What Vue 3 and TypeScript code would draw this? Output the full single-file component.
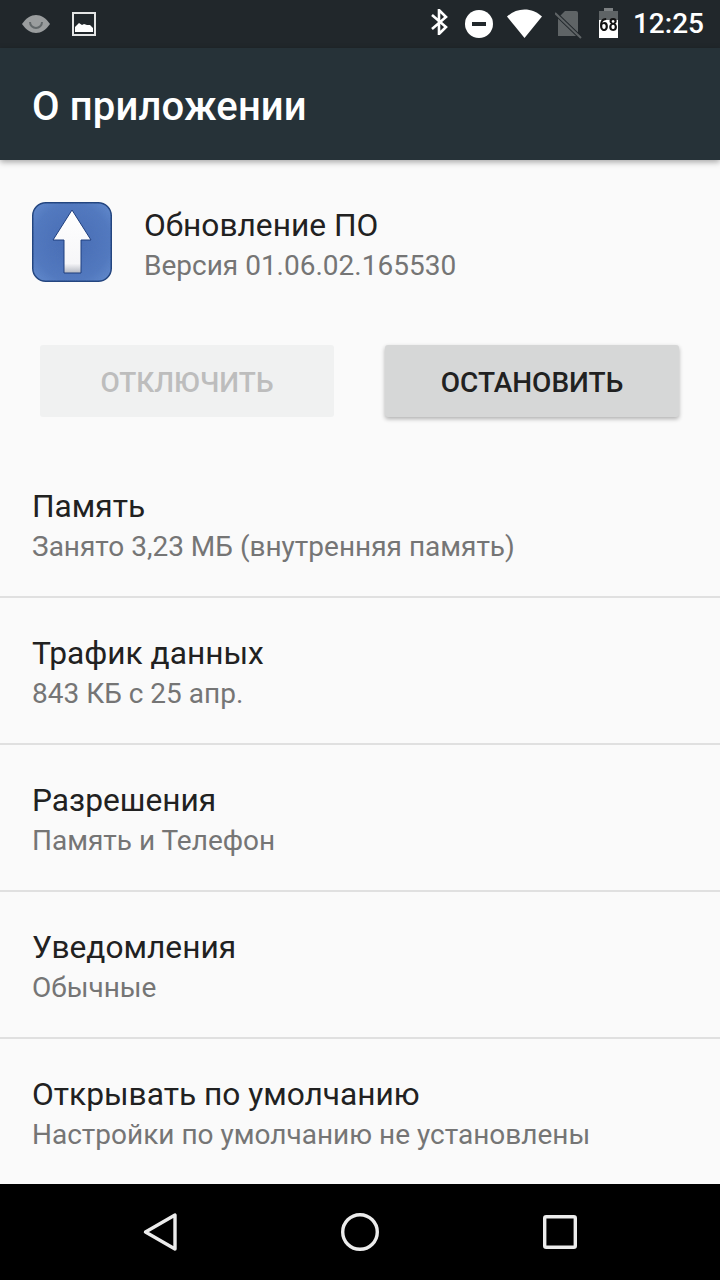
<script setup lang="ts">
const rows = [
  { title: 'Память', sub: 'Занято 3,23 МБ (внутренняя память)' },
  { title: 'Трафик данных', sub: '843 КБ с 25 апр.' },
  { title: 'Разрешения', sub: 'Память и Телефон' },
  { title: 'Уведомления', sub: 'Обычные' },
  { title: 'Открывать по умолчанию', sub: 'Настройки по умолчанию не установлены' },
]
</script>

<template>
  <div class="screen">
    <div class="status-bar">
      <div class="status-left">
        <svg class="eye" width="28" height="18" viewBox="0 0 28 18">
          <path d="M0 9C4 3 9 0 14 0s10 3 14 9c-4 6-9 9-14 9S4 15 0 9z" fill="#9a9d9e" />
          <path d="M8 7a6 6 0 0 0 12 0" fill="none" stroke="#62686a" stroke-width="2" />
        </svg>
        <svg class="pic" width="24" height="24" viewBox="0 0 24 24">
          <rect x="1" y="1" width="22" height="22" fill="#21272b" stroke="#e4e5e5" stroke-width="2" />
          <path d="M3 20v-5l4-4 3 2 2-1 3 1 3 0 3 3v4z" fill="#fff" />
        </svg>
      </div>
      <div class="status-right">
        <svg class="bt" width="18" height="26" viewBox="0 0 18 26">
          <path d="M2 6l14 12-7 7V1l7 7L2 20" fill="none" stroke="#fff" stroke-width="2.6" />
        </svg>
        <svg class="dnd" width="28" height="28" viewBox="0 0 28 28">
          <circle cx="14" cy="14" r="14" fill="#fff" />
          <rect x="7" y="12" width="14" height="4" fill="#21272b" />
        </svg>
        <svg class="wifi" width="35" height="29" viewBox="0 0 35 29">
          <path d="M0 7.5C5 3 11 .5 17.5 .5S30 3 35 7.5L17.5 29z" fill="#fff" />
        </svg>
        <svg class="sim" width="27" height="28" viewBox="0 0 27 28">
          <path d="M10 0h11a2 2 0 0 1 2 2v23H3V7z" fill="#5f6466" />
          <path d="M0 2l26 25" stroke="#21272b" stroke-width="4" />
          <path d="M0 2l26 25" stroke="#5f6466" stroke-width="2" />
        </svg>
        <div class="battery">
          <div class="battery-cap"></div>
          <div class="battery-body"><span>68</span></div>
        </div>
        <span class="clock">12:25</span>
      </div>
    </div>

    <header class="app-bar">
      <h1>О приложении</h1>
    </header>

    <main class="content">
      <section class="app-head">
        <svg class="app-icon" width="80" height="80" viewBox="0 0 80 80">
          <defs>
            <radialGradient id="tile" cx="50%" cy="50%" r="65%">
              <stop offset="0" stop-color="#466bb4" />
              <stop offset="0.75" stop-color="#5279c0" />
              <stop offset="1" stop-color="#6088cc" />
            </radialGradient>
            <linearGradient id="arrow" x1="0" y1="0" x2="0" y2="1">
              <stop offset="0" stop-color="#ffffff" />
              <stop offset="0.85" stop-color="#f6f6f8" />
              <stop offset="1" stop-color="#b4b8c2" />
            </linearGradient>
            <filter id="grain" x="0" y="0" width="100%" height="100%">
              <feTurbulence type="fractalNoise" baseFrequency="0.9" numOctaves="2" seed="4" />
              <feColorMatrix values="0 0 0 0 0.1  0 0 0 0 0.2  0 0 0 0 0.45  0 0 0 1.4 -0.5" />
              <feComposite in2="SourceGraphic" operator="in" />
            </filter>
          </defs>
          <rect x="0.75" y="0.75" width="78.5" height="78.5" rx="13" fill="url(#tile)" stroke="#23457f" stroke-width="1.5" />
          <rect x="1" y="1" width="78" height="78" rx="13" fill="#000" filter="url(#grain)" opacity="0.4" />
          <path d="M40 8L59 38H49V71H32V38H21z" fill="url(#arrow)" stroke="#1f3f7e" stroke-width="1" />
        </svg>
        <div class="app-text">
          <div class="app-name">Обновление ПО</div>
          <div class="app-version">Версия 01.06.02.165530</div>
        </div>
      </section>

      <div class="buttons">
        <button type="button" class="btn disabled">ОТКЛЮЧИТЬ</button>
        <button type="button" class="btn raised">ОСТАНОВИТЬ</button>
      </div>

      <div class="list">
        <div v-for="row in rows" :key="row.title" class="row">
          <div class="row-title">{{ row.title }}</div>
          <div class="row-sub">{{ row.sub }}</div>
        </div>
      </div>
    </main>

    <nav class="nav-bar">
      <svg width="34" height="40" viewBox="0 0 34 40">
        <path d="M2.5 20L32 3v34z" fill="none" stroke="#ececec" stroke-width="3.4" stroke-linejoin="round" />
      </svg>
      <svg width="38" height="38" viewBox="0 0 38 38">
        <circle cx="19" cy="19" r="17.3" fill="none" stroke="#ececec" stroke-width="3.4" />
      </svg>
      <svg width="34" height="34" viewBox="0 0 34 34">
        <rect x="1.7" y="1.7" width="30.6" height="30.6" rx="1.5" fill="none" stroke="#ececec" stroke-width="3.4" />
      </svg>
    </nav>
  </div>
</template>

<style>
html, body { margin: 0; background: #fafafa; }
</style>

<style scoped>
.screen {
  width: 720px;
  height: 1280px;
  display: flex;
  flex-direction: column;
  overflow: hidden;
  font-family: Roboto, "Noto Sans", sans-serif;
  background: #fafafa;
}

/* status bar */
.status-bar {
  height: 48px;
  flex: none;
  background: #21272b;
  display: flex;
  justify-content: space-between;
  align-items: center;
  padding: 0 16px 0 22px;
}
.status-left { display: flex; align-items: center; gap: 22px; }
.status-right { display: flex; align-items: center; gap: 14px; }
.bt { margin-top: -4px; margin-right: 3px; }
.wifi { margin-top: -1px; margin-right: -1px; }
.sim { margin-top: 2px; margin-right: 3px; }
.clock { color: #fff; font-size: 28px; font-weight: 500; line-height: 48px; margin-left: 1px; }

.battery { width: 19px; height: 30px; margin-top: -2px; display: flex; flex-direction: column; align-items: center; }
.battery-cap { width: 9px; height: 3px; background: #7c8082; }
.battery-body {
  width: 19px;
  height: 27px;
  background: linear-gradient(#5f6466 0 9px, #fff 9px);
  display: flex;
  align-items: flex-start;
  justify-content: center;
}
.battery-body span {
  font-size: 16px;
  font-weight: 700;
  color: #111;
  line-height: 16px;
  margin-top: 6px;
  transform: scaleY(1.2);
}

/* app bar */
.app-bar {
  height: 112px;
  flex: none;
  box-sizing: border-box;
  background: #263238;
  display: flex;
  align-items: center;
  padding: 4px 32px 0;
  box-shadow: 0 2px 6px rgba(0, 0, 0, 0.35);
  position: relative;
  z-index: 1;
}
.app-bar h1 { margin: 0; color: #fff; font-size: 40px; font-weight: 500; letter-spacing: 0.15px; }

.content { flex: 1; min-height: 0; overflow: hidden; }

.app-head { display: flex; align-items: flex-start; padding: 42px 32px 0; gap: 32px; }
.app-icon { flex: none; }
.app-text { padding-top: 4px; }
.app-name { font-size: 31.7px; color: #212121; line-height: 40px; }
.app-version { font-size: 28px; color: #757575; line-height: 40px; }

.buttons { display: flex; justify-content: space-between; padding: 59px 41px 0 40px; }
.btn {
  width: 294px;
  height: 72px;
  border: none;
  border-radius: 3px;
  font-family: inherit;
  font-size: 28px;
  font-weight: 500;
  padding: 2px 0 0;
}
.btn.disabled { background: #f0f1f1; color: #bdbdbd; }
.btn.raised { background: #d6d7d7; color: #212121; box-shadow: 0 2px 4px rgba(0, 0, 0, 0.3); }

.list { padding-top: 34px; }
.row {
  height: 139px;
  border-bottom: 2px solid #e0e0e0;
  padding: 6px 32px 0;
  display: flex;
  flex-direction: column;
  justify-content: center;
}
.row:last-child { border-bottom: none; }
.row-title { font-size: 31.7px; color: #212121; line-height: 40px; }
.row-sub { font-size: 28px; color: #757575; line-height: 40px; }

/* nav bar */
.nav-bar {
  height: 96px;
  flex: none;
  background: #000;
  display: grid;
  grid-template-columns: repeat(3, 200px);
  justify-content: center;
  justify-items: center;
  align-items: center;
}
</style>
